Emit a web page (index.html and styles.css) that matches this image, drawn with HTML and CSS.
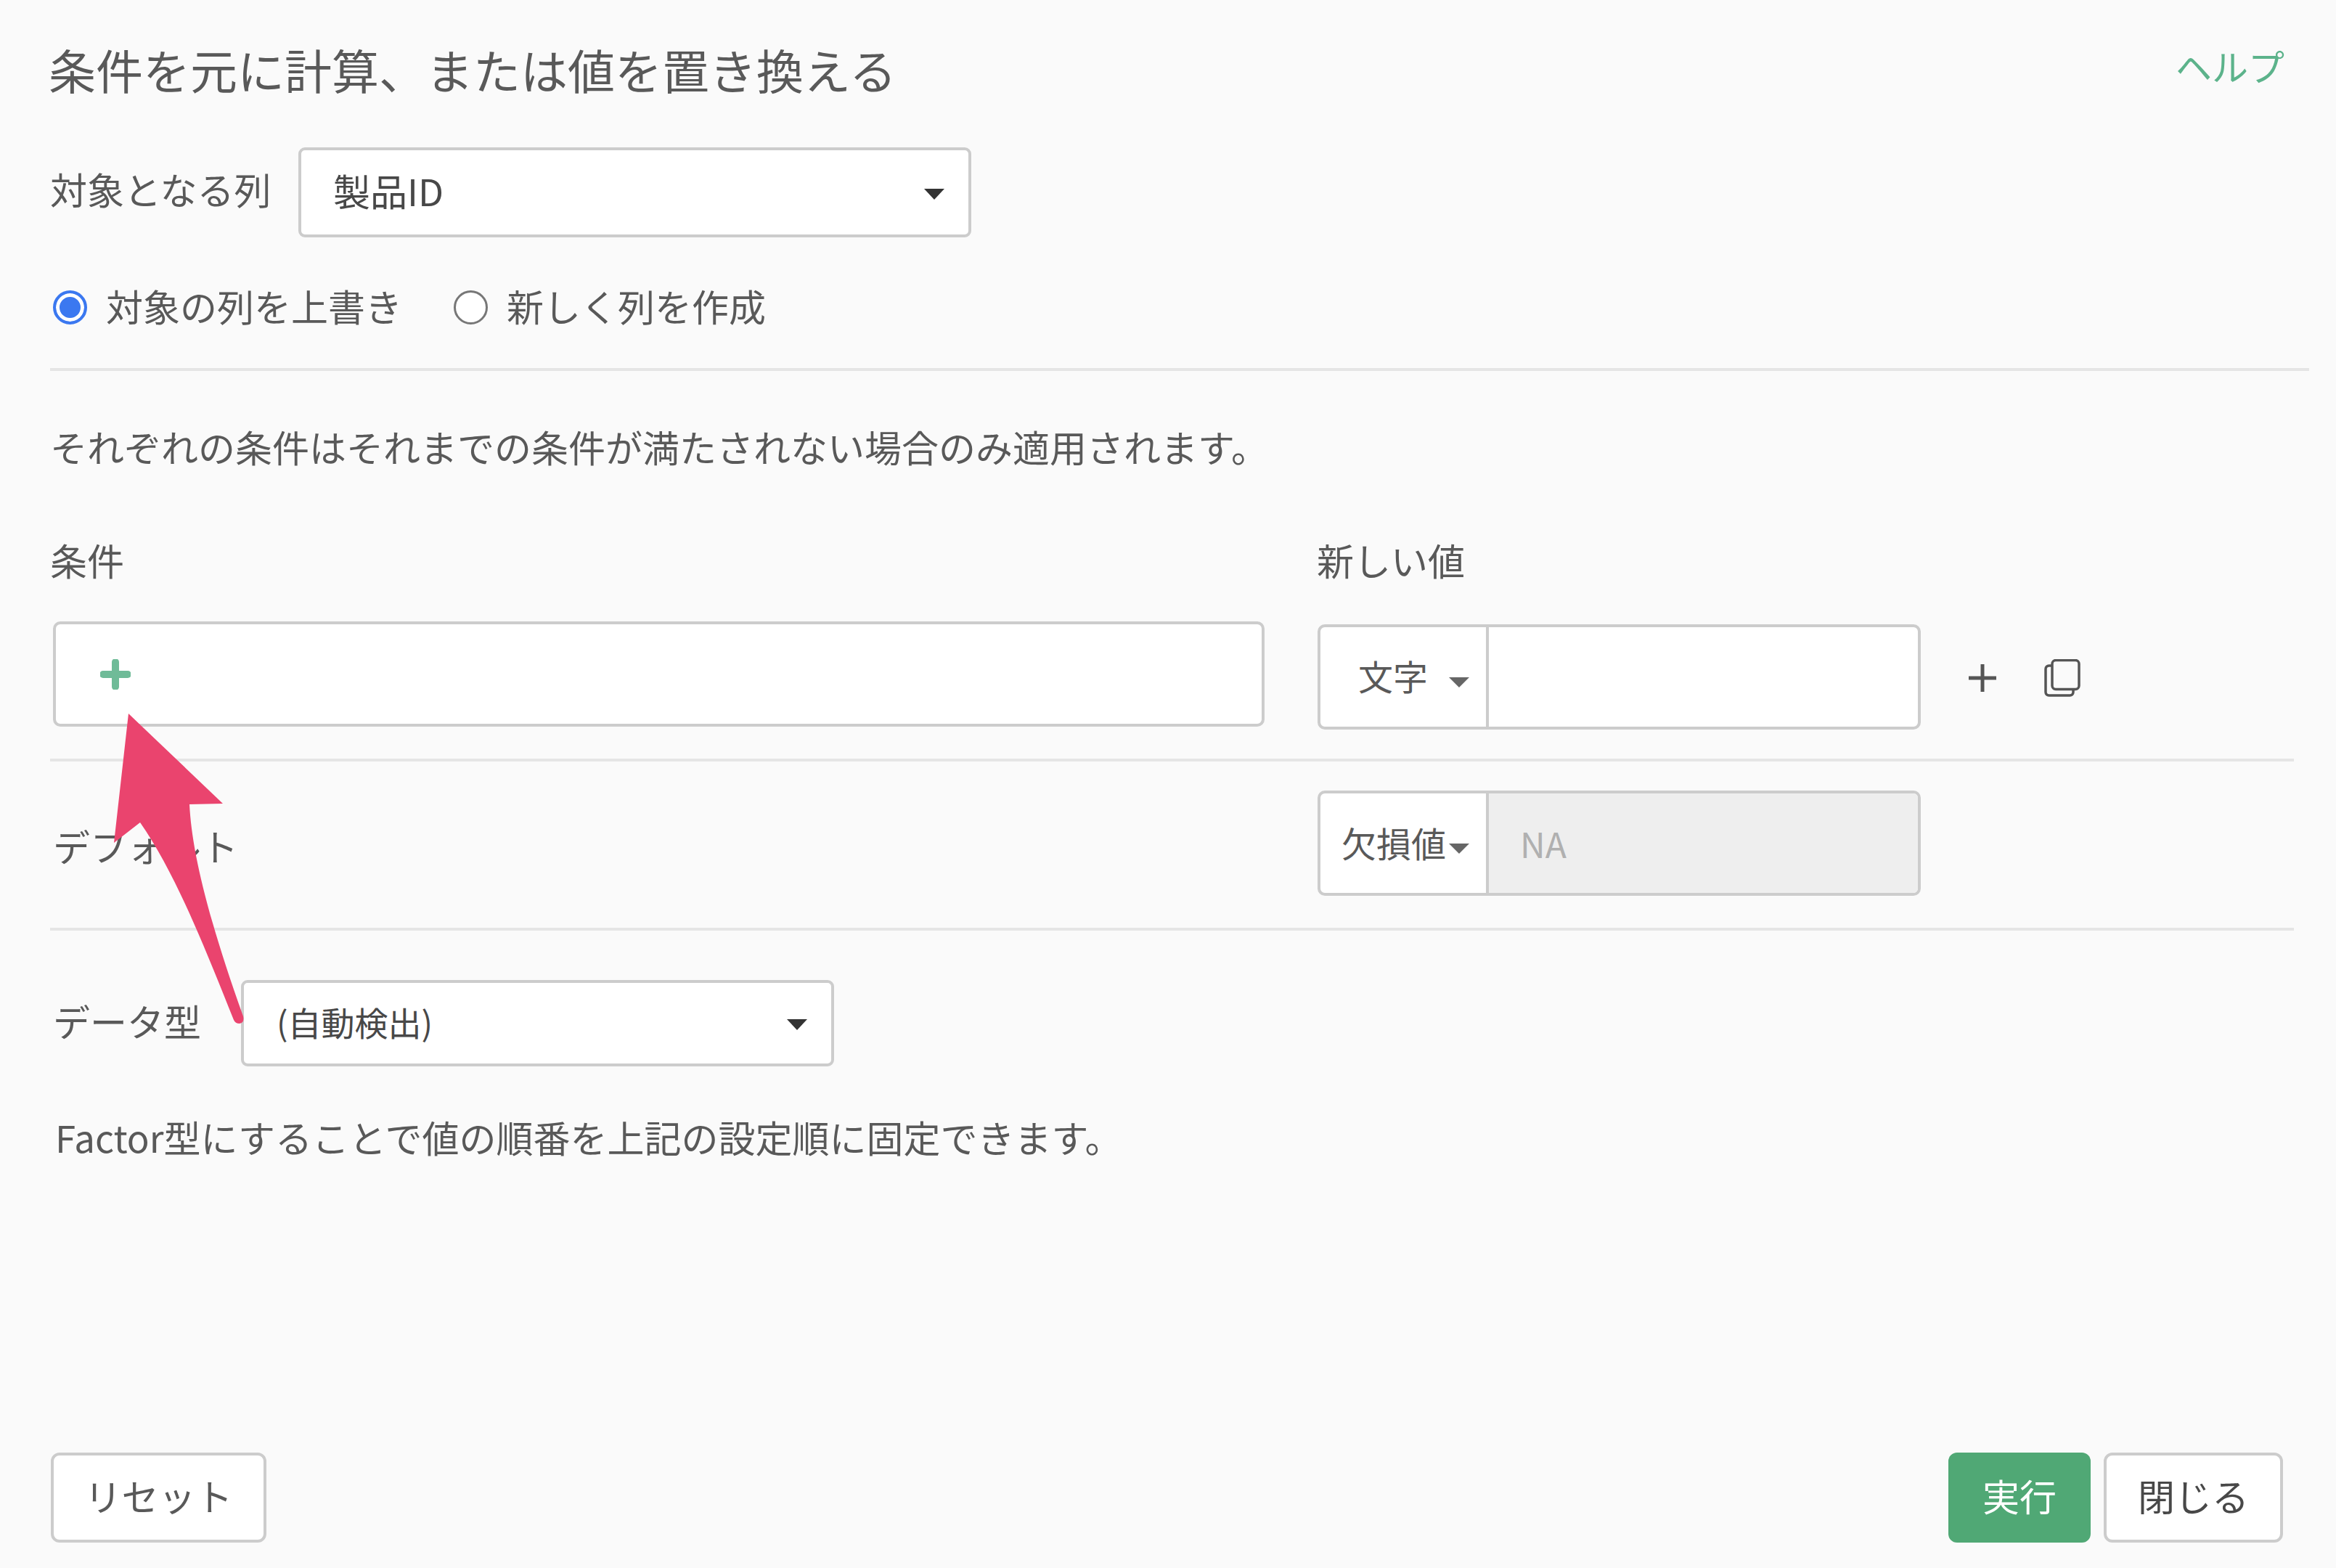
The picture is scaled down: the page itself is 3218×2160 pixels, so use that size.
FILE: index.html
```html
<!DOCTYPE html>
<html lang="ja">
<head>
<meta charset="utf-8">
<title>条件を元に計算</title>
<link rel="stylesheet" href="styles.css">
</head>
<body>
<main class="dialog">
  <header class="header">
    <h1 class="title">条件を元に計算、または値を置き換える</h1>
    <a class="help">ヘルプ</a>
  </header>

  <div class="target-row">
    <span class="target-label">対象となる列</span>
    <div class="select select-target"><span class="select-text">製品ID</span><i class="caret caret-dark"></i></div>
  </div>

  <div class="radio-row">
    <label class="radio-item"><span class="radio radio-on"></span><span class="radio-text">対象の列を上書き</span></label>
    <label class="radio-item"><span class="radio"></span><span class="radio-text">新しく列を作成</span></label>
  </div>

  <hr class="rule rule-long">

  <p class="note">それぞれの条件はそれまでの条件が満たされない場合のみ適用されます。</p>

  <div class="head-row">
    <span class="head-cond">条件</span>
    <span>新しい値</span>
  </div>

  <div class="cond-row">
    <div class="cond-box">
      <svg class="cond-plus" viewBox="0 0 42 42"><path d="M21 4V38M4 21H38"/></svg>
    </div>
    <div class="group">
      <div class="group-select"><span class="type-text">文字</span><i class="caret caret-small"></i></div>
      <div class="group-input"></div>
    </div>
    <svg class="icon-plus" viewBox="0 0 40 40"><path d="M20 1V39M1 20H39"/></svg>
    <svg class="icon-copy" viewBox="0 0 50 52">
      <rect x="11" y="1.5" width="37" height="40" rx="5"/>
      <path d="M11 9H6.500A4.500 4.500 0 0 0 2 13.500V45.500A4.500 4.500 0 0 0 6.500 50H35.500A4.500 4.500 0 0 0 40 45.500V41.500"/>
    </svg>
  </div>

  <hr class="rule rule-short rule-one">

  <div class="default-row">
    <span class="default-label">デフォルト</span>
    <div class="group">
      <div class="group-select"><span class="type-text-wide">欠損値</span><i class="caret caret-small"></i></div>
      <div class="group-input group-disabled"><span class="na-text">NA</span></div>
    </div>
  </div>

  <hr class="rule rule-short rule-two">

  <div class="type-row">
    <span class="type-label">データ型</span>
    <div class="select select-type"><span class="select-text">(自動検出)</span><i class="caret caret-dark"></i></div>
  </div>

  <p class="factor">Factor型にすることで値の順番を上記の設定順に固定できます。</p>

  <footer class="footer">
    <button class="btn btn-reset">リセット</button>
    <div class="footer-right">
      <button class="btn btn-run">実行</button>
      <button class="btn btn-close">閉じる</button>
    </div>
  </footer>

  <svg class="arrow" viewBox="0 0 3218 2160">
    <path d="M177 983 L307 1107 L261 1108 C264 1170 285 1260 335 1400 Q337 1409 330 1410 Q324 1410 322 1405 C280 1300 240 1200 193 1133 L157 1161 Z" />
  </svg>
</main>
</body>
</html>
```
FILE: styles.css
```css
* { box-sizing: border-box; }
html, body { margin: 0; padding: 0; }
body {
  background: #fafafa;
  color: #595959;
  font-family: "Noto Sans CJK JP", "Noto Sans", sans-serif;
  font-size: 51px;
  font-weight: 400;
}
.dialog {
  position: relative;
  height: 2160px;
  display: flex;
  flex-direction: column;
  padding-left: 69px;
  overflow: hidden;
}
.header {
  height: 203px;
  display: flex;
  justify-content: space-between;
  align-items: center;
  padding-right: 71px;
}
.title { margin: -12px 0 0 -2px; font-size: 65px; font-weight: 400; line-height: 1; }
.help { color: #5cb38b; font-size: 50px; line-height: 1; margin-top: -24px; }
.target-row { display: flex; align-items: center; height: 124px; }
.target-label { width: 342px; padding-bottom: 10px; }
.select {
  height: 100%;
  background: #fff;
  border: 4px solid #ccc;
  border-radius: 9px;
  display: flex;
  align-items: center;
  justify-content: space-between;
  color: #484848;
}
.select-text { padding-bottom: 6px; }
.select-target { width: 927px; padding: 0 33px 0 44px; }
.caret { width: 0; height: 0; display: block; border-style: solid; border-color: transparent; border-bottom-width: 0; }
.caret-dark { border-width: 15px 14px 0; border-top-color: #333; margin-top: 4px; }
.caret-small { border-width: 14px 14px 0; border-top-color: #666; position: absolute; right: 23px; top: 69px; }
.radio-row { display: flex; height: 60px; margin-top: 66px; align-items: center; margin-left: 4px; }
.radio-item { display: flex; align-items: center; margin-right: 71px; }
.radio-text { padding-bottom: 4px; }
.radio {
  width: 47px;
  height: 47px;
  border-radius: 50%;
  border: 3px solid #777;
  margin-right: 26px;
  background: #fff;
}
.radio-on {
  border: 4px solid #3b78f0;
  background: #3b78f0;
  box-shadow: inset 0 0 0 5px #fff;
}
.rule { border: 0; height: 4px; background: #e5e5e5; margin: 0; }
.rule-long { margin-top: 54px; margin-right: 37px; }
.rule-short { margin-right: 58px; }
.rule-one { margin-top: 40px; }
.rule-two { margin-top: 44px; }
.note { margin: 74px 0 3px; height: 60px; line-height: 60px; }
.head-row { display: flex; height: 60px; line-height: 60px; margin-top: 93px; }
.head-cond { width: 1745px; }
.cond-row { display: flex; align-items: flex-start; margin-top: 55px; margin-left: 4px; position: relative; }
.cond-box {
  width: 1669px;
  height: 145px;
  margin-right: 73px;
  background: #fff;
  border: 4px solid #ccc;
  border-radius: 10px;
  display: flex;
  align-items: center;
  padding-left: 61px;
}
.cond-plus { width: 42px; height: 42px; fill: none; stroke: #6fbb98; stroke-width: 10; stroke-linecap: round; }
.group {
  position: relative;
  width: 831px;
  height: 145px;
  margin-top: 4px;
  display: flex;
  background: #fff;
  border: 4px solid #ccc;
  border-radius: 10px;
  overflow: hidden;
}
.group-select {
  width: 232px;
  border-right: 4px solid #ccc;
  display: flex;
  align-items: center;
  font-size: 48px;
  position: relative;
}
.type-text { margin-left: 52px; padding-bottom: 6px; }
.type-text-wide { margin-left: 29px; padding-bottom: 4px; }
.group-input { flex: 1; }
.group-disabled { background: #eee; color: #b0b0b0; display: flex; align-items: center; padding-left: 43px; font-size: 48px; }
.na-text { padding-bottom: 2px; }
.icon-plus { width: 40px; height: 40px; margin: 58px 0 0 65px; fill: none; stroke: #555; stroke-width: 5; }
.icon-copy { width: 50px; height: 52px; margin: 52px 0 0 65px; fill: none; stroke: #555; stroke-width: 3.500; }
.default-row { display: flex; margin-top: 40px; margin-left: 4px; }
.default-label { width: 1742px; line-height: 60px; padding-top: 46px; }
.default-row .group { margin-top: 0; }
.type-row { display: flex; align-items: center; height: 119px; margin-top: 68px; margin-left: 4px; }
.type-label { width: 259px; margin-top: -8px; }
.select-type { width: 817px; padding: 0 33px 0 45px; font-size: 46px; }
.factor { margin: 67px 0 0 7px; height: 60px; line-height: 60px; }
.footer {
  margin-top: auto;
  padding: 0 73px 35px 1px;
  display: flex;
  justify-content: space-between;
}
.footer-right { display: flex; gap: 18px; }
.btn {
  height: 124px;
  border-radius: 12px;
  font: inherit;
  padding: 0 0 6px;
}
.btn-reset { width: 297px; background: #fff; border: 4px solid #ccc; color: #595959; }
.btn-run { width: 196px; background: #50a875; border: 0; color: #fff; }
.btn-close { width: 247px; background: #fff; border: 4px solid #ccc; color: #484848; }
.arrow { position: absolute; left: 0; top: 0; width: 3218px; height: 2160px; fill: #ea446e; pointer-events: none; }
```
